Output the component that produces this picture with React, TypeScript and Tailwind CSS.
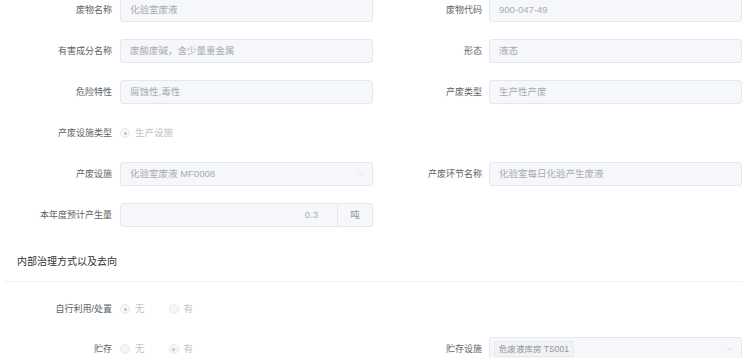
import { ChevronDown } from 'lucide-react';

const font = { fontFamily: '"Liberation Sans", "Noto Sans CJK SC", sans-serif' };

function Label({ text, w }: { text: string; w: string }) {
  return (
    <div className={`${w} shrink-0 text-right text-[9px] text-[#606266] leading-none`}>{text}</div>
  );
}

function Field({ value }: { value: string }) {
  return (
    <div className="flex-1 h-[24px] flex items-center px-[9px] rounded-[3px] border border-[#e4e7ed] bg-[#f5f7fa] text-[9.5px] text-[#a8abb2]">
      {value}
    </div>
  );
}

function SelectField({ value }: { value: string }) {
  return (
    <div className="flex-1 h-[24px] flex items-center justify-between pl-[9px] pr-[6px] rounded-[3px] border border-[#e4e7ed] bg-[#f5f7fa] text-[9.5px] text-[#a8abb2]">
      <span>{value}</span>
      <ChevronDown className="w-[10px] h-[10px] text-[#c0c4cc]" strokeWidth={1.2} />
    </div>
  );
}

function Radio({ checked, label }: { checked: boolean; label: string }) {
  return (
    <div className="flex items-center gap-[5px] mr-[24px]">
      <span className="w-[10px] h-[10px] rounded-full border border-[#e4e7ed] bg-[#f5f7fa] flex items-center justify-center">
        {checked && <span className="w-[3px] h-[3px] rounded-full bg-[#c0c4cc]" />}
      </span>
      <span className="text-[9.5px] text-[#c0c4cc] leading-none">{label}</span>
    </div>
  );
}

function Row({ label, lw, children }: { label: string; lw: string; children: React.ReactNode }) {
  return (
    <div className="flex items-center h-[24px]">
      <Label text={label} w={lw} />
      {children}
    </div>
  );
}

export default function App() {
  const L = 'w-[120px] pr-[8px]';
  const R = 'w-[116px] pr-[7px]';
  return (
    <div className="w-[750px] h-[358px] overflow-hidden bg-white" style={font}>
      <div className="pr-[8px] mt-[-2px]">
        {/* Basic info */}
        <div className="grid grid-cols-[373px_1fr] gap-y-[17px]">
          <Row label="废物名称" lw={L}><Field value="化验室废液" /></Row>
          <Row label="废物代码" lw={R}><Field value="900-047-49" /></Row>

          <Row label="有害成分名称" lw={L}><Field value="废酸废碱，含少量重金属" /></Row>
          <Row label="形态" lw={R}><Field value="液态" /></Row>

          <Row label="危险特性" lw={L}><Field value="腐蚀性,毒性" /></Row>
          <Row label="产废类型" lw={R}><Field value="生产性产废" /></Row>

          <Row label="产废设施类型" lw={L}>
            <Radio checked label="生产设施" />
          </Row>
          <div />

          <Row label="产废设施" lw={L}><SelectField value="化验室废液 MF0008" /></Row>
          <Row label="产废环节名称" lw={R}><Field value="化验室每日化验产生废液" /></Row>

          <Row label="本年度预计产生量" lw={L}>
            <div className="flex-1 h-[24px] flex rounded-[3px] border border-[#e4e7ed] bg-[#f5f7fa] text-[9.5px]">
              <div className="flex-1 flex items-center justify-end pr-[19px] text-[#a8abb2]">0.3</div>
              <div className="w-[35px] flex items-center justify-center border-l border-[#e4e7ed] text-[#909399]">吨</div>
            </div>
          </Row>
          <div />
        </div>

        {/* Section title */}
        <div className="pl-[17px] pt-[30px] text-[10px] text-[#303133] leading-none">内部治理方式以及去向</div>
        <div className="ml-[5px] mt-[14px] h-px bg-[#eef0f3]" />

        <div className="grid grid-cols-[373px_1fr] gap-y-[16px] mt-[15px]">
          <Row label="自行利用/处置" lw={L}>
            <Radio checked label="无" />
            <Radio checked={false} label="有" />
          </Row>
          <div />

          <Row label="贮存" lw={L}>
            <Radio checked={false} label="无" />
            <Radio checked label="有" />
          </Row>
          <Row label="贮存设施" lw={R}>
            <div className="flex-1 h-[25px] flex items-center justify-between pl-[4px] pr-[6px] rounded-[3px] border border-[#e4e7ed] bg-[#f5f7fa]">
              <span className="h-[16px] px-[4px] flex items-center rounded-[2px] border border-[#e9e9eb] bg-[#f0f2f5] text-[8.5px] text-[#909399]">
                危废液库房 TS001
              </span>
              <ChevronDown className="w-[10px] h-[10px] text-[#c0c4cc]" strokeWidth={1.2} />
            </div>
          </Row>
        </div>
      </div>
    </div>
  );
}
